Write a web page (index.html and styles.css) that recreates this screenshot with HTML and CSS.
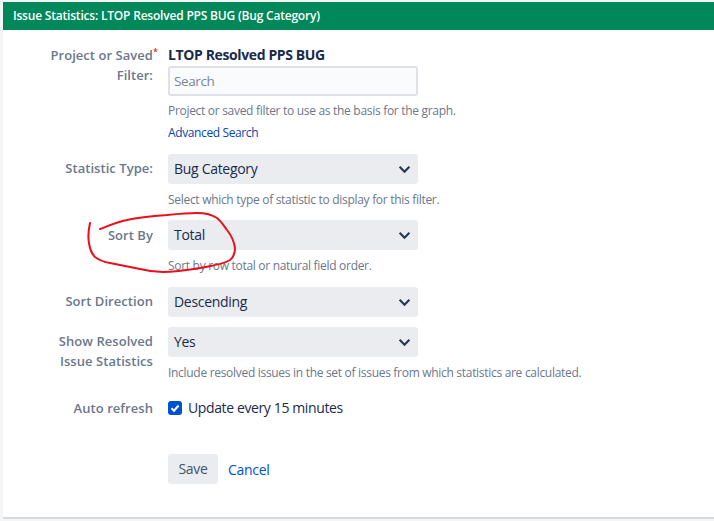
FILE: index.html
```html
<!DOCTYPE html>
<html lang="en">
<head>
<meta charset="utf-8">
<title>Issue Statistics</title>
<link rel="stylesheet" href="styles.css">
</head>
<body>
<div class="dialog">
  <h1 class="title">Issue Statistics: LTOP Resolved PPS BUG (Bug Category)</h1>
  <form class="form">
    <div class="row row-filter">
      <div class="label">Project or Saved<sup class="req">*</sup> Filter:</div>
      <div class="field">
        <div class="value">LTOP Resolved PPS BUG</div>
        <div class="input">Search</div>
        <div class="help help-a">Project or saved filter to use as the basis for the graph.</div>
        <a class="adv">Advanced Search</a>
      </div>
    </div>
    <div class="row row-type">
      <div class="label">Statistic Type:</div>
      <div class="field">
        <div class="select">Bug Category<svg class="chev" viewBox="0 0 12 8"><path d="M1.500 1.500 6 6l4.500-4.500"/></svg></div>
        <div class="help">Select which type of statistic to display for this filter.</div>
      </div>
    </div>
    <div class="row row-sort">
      <div class="label">Sort By</div>
      <div class="field">
        <div class="select">Total<svg class="chev" viewBox="0 0 12 8"><path d="M1.500 1.500 6 6l4.500-4.500"/></svg></div>
        <div class="help">Sort by row total or natural field order.</div>
      </div>
    </div>
    <div class="row row-dir">
      <div class="label">Sort Direction</div>
      <div class="field">
        <div class="select">Descending<svg class="chev" viewBox="0 0 12 8"><path d="M1.500 1.500 6 6l4.500-4.500"/></svg></div>
      </div>
    </div>
    <div class="row row-res">
      <div class="label">Show Resolved Issue Statistics</div>
      <div class="field">
        <div class="select">Yes<svg class="chev" viewBox="0 0 12 8"><path d="M1.500 1.500 6 6l4.500-4.500"/></svg></div>
        <div class="help">Include resolved issues in the set of issues from which statistics are calculated.</div>
      </div>
    </div>
    <div class="row row-auto">
      <div class="label">Auto refresh</div>
      <div class="field check">
        <svg class="box" viewBox="0 0 14 14"><rect width="14" height="14" rx="3"/><path d="M3.500 7.200 6 9.700l4.600-5.200"/></svg>
        <span>Update every 15 minutes</span>
      </div>
    </div>
    <div class="actions">
      <div class="save">Save</div>
      <a class="cancel">Cancel</a>
    </div>
  </form>
</div>
<svg class="scribble" viewBox="0 0 714 521" width="714" height="521"><path d="M90 223C88 232 88 238 89 243C90 250 92 254 95 257C99 260 104 262 110 263C120 265 130 267 140 269C148 271 155 272 163 272C176 272 188 270 200 268C212 266 224 264 230 260C234 257 235 252 235 248C234 241 231 235 227 230C224 226 221 221 217 218C211 214 204 213 197 213C187 213 177 214 167 215C153 216 140 217 127 220C117 222 108 226 100 229"/></svg>
</body>
</html>
```
FILE: styles.css
```css
* { box-sizing: border-box; }
html, body { margin: 0; padding: 0; height: 521px; overflow: hidden; background: #f4f5f7; }
body { font-family: "Open Sans", sans-serif; font-size: 14px; color: #172b4d; position: relative; }
.dialog { margin: 2px 0 0 3px; height: 517px; background: #fff; border-bottom: 2px solid #d5d8df; }
.title { margin: 0; height: 28px; background: #00875a; color: #fff; font-size: 12px; font-weight: 600; line-height: 28px; padding-left: 10px; letter-spacing: -0.2px; }
.row { display: flex; }
.label { width: 112px; margin: 0 15px 0 38px; text-align: right; color: #6b778c; font-weight: 600; font-size: 13px; line-height: 20px; letter-spacing: 0.05px; }
.req { color: #de350b; font-size: 9px; line-height: 0; vertical-align: 5px; margin-right: -5px; }
.field { width: 540px; }
.row-filter { padding-top: 15px; }
.row-type { padding-top: 13px; }
.row-sort { padding-top: 12px; }
.row-dir { padding-top: 13px; }
.row-res { padding-top: 10px; }
.row-auto { padding-top: 17px; }
.value { font-weight: 700; font-size: 14px; line-height: 20px; letter-spacing: -0.38px; }
.input { width: 250px; height: 30px; background: #fafbfc; border: 2px solid #dfe1e6; border-radius: 3px; color: #7a869a; font-size: 13.500px; line-height: 26px; padding-left: 4px; letter-spacing: -0.4px; margin-top: 1px; }
.help { color: #6b778c; font-size: 12px; line-height: 16px; margin-top: 8px; letter-spacing: -0.3px; }
.help-a { margin-top: 7px; }
.adv { display: block; color: #0747a6; font-size: 12px; line-height: 16px; margin-top: 6px; letter-spacing: -0.38px; }
.select { position: relative; width: 250px; height: 30px; background: #ebecf0; border-radius: 3px; line-height: 30px; padding-left: 6px; letter-spacing: -0.3px; }
.row-type .label, .row-dir .label, .row-res .label { padding-top: 4px; }
.row-sort .label { padding-top: 5px; }
.chev { position: absolute; right: 7px; top: 11px; width: 13px; height: 9px; fill: none; stroke: #253858; stroke-width: 2; }
.check { display: flex; align-items: center; height: 19px; gap: 6px; letter-spacing: -0.38px; }
.box { width: 14px; height: 14px; flex: none; }
.box rect { fill: #0052cc; }
.box path { fill: none; stroke: #fff; stroke-width: 2; }
.actions { display: flex; align-items: center; margin: 36px 0 0 165px; gap: 10px; letter-spacing: -0.3px; }
.save { width: 50px; height: 30px; background: #ebecf0; border-radius: 3px; color: #42526e; text-align: center; line-height: 30px; }
.cancel { color: #0052cc; }
.scribble { position: absolute; left: 0; top: 0; pointer-events: none; }
.scribble path { fill: none; stroke: #ea0f1a; stroke-width: 2; stroke-linecap: round; stroke-linejoin: round; }
```
